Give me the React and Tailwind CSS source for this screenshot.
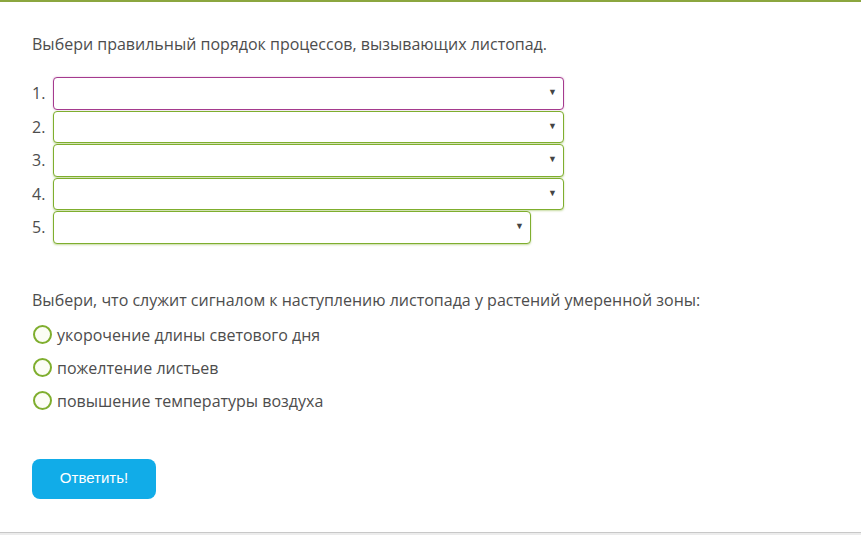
import React from "react";

function Select({ wide = true, first = false }) {
  return (
    <div
      className={`relative h-[32.5px] rounded-[4px] border bg-white ${
        wide ? "w-[511px]" : "w-[478px]"
      } ${
        first
          ? "border-[#a53a8e] shadow-[0_0_2px_rgba(165,58,142,0.35)]"
          : "border-[#7fae2e] shadow-[0_1px_2px_rgba(127,174,46,0.45)]"
      }`}
    >
      <span className="absolute right-[6px] top-[9px] text-[9px] leading-none text-[#444]">▼</span>
    </div>
  );
}

export default function App() {
  const rows = [1, 2, 3, 4, 5];
  const opts = [
    "укорочение длины светового дня",
    "пожелтение листьев",
    "повышение температуры воздуха",
  ];
  return (
    <div className="flex h-[535px] w-[861px] flex-col bg-white font-['Open_Sans',sans-serif] text-[#4d4d4d]">
      <div className="h-[2px] bg-[#8ba63f]" />
      <div className="flex-1 px-[32px] pt-[31px]">
        <p className="text-[16px] leading-[22px]">Выбери правильный порядок процессов, вызывающих листопад.</p>
        <div className="mt-[22px] flex flex-col gap-[1px]">
          {rows.map((n) => (
            <div key={n} className="flex items-center">
              <span className="w-[21px] text-[16px] leading-[22px]">{n}.</span>
              <Select wide={n !== 5} first={n === 1} />
            </div>
          ))}
        </div>
        <p className="mt-[45px] text-[16px] leading-[22px]">
          Выбери, что служит сигналом к наступлению листопада у растений умеренной зоны:
        </p>
        <div className="mt-[13px] flex flex-col gap-[11px]">
          {opts.map((o) => (
            <div key={o} className="flex h-[22px] items-center">
              <span className="ml-[1px] mr-[5px] h-[19px] w-[19px] rounded-full border-2 border-[#7fae2e] bg-[#fcfdf5]" />
              <span className="text-[16px] leading-[22px]">{o}</span>
            </div>
          ))}
        </div>
        <button className="mt-[47px] flex h-[40px] w-[124px] items-center justify-center rounded-[8px] bg-[#11ace8] font-['Liberation_Sans',sans-serif] text-[15px] text-white">
          Ответить!
        </button>
      </div>
      <div className="h-[3px] border-t border-[#c8c8c8] bg-[#ececec]" />
    </div>
  );
}
